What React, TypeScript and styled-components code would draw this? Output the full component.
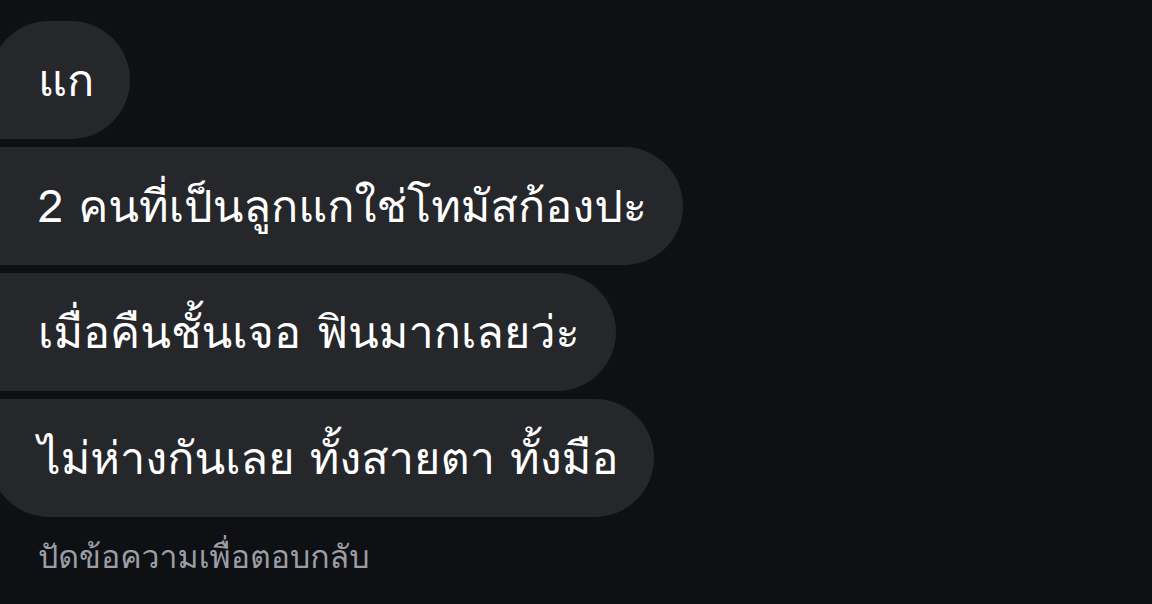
import React from "react";
import styled, { createGlobalStyle } from "styled-components";

const GlobalStyle = createGlobalStyle`
  html, body {
    margin: 0;
    padding: 0;
    background: #0e1014;
    overflow: hidden;
  }
`;

type Position = "first" | "middle" | "last";

const messages = [
  "แก",
  "2 คนที่เป็นลูกแกใช่โทมัสก้องปะ",
  "เมื่อคืนชั้นเจอ ฟินมากเลยว่ะ",
  "ไม่ห่างกันเลย ทั้งสายตา ทั้งมือ",
];

export default function App() {
  return (
    <>
      <GlobalStyle />
      <StyledThread>
        <BubbleList>
          {messages.map((text, i) => (
            <Bubble
              key={i}
              $position={i === 0 ? "first" : i === messages.length - 1 ? "last" : "middle"}
            >
              {text}
            </Bubble>
          ))}
        </BubbleList>
        <Hint>ปัดข้อความเพื่อตอบกลับ</Hint>
      </StyledThread>
    </>
  );
}

const StyledThread = styled.div`
  width: 1152px;
  height: 604px;
  background: #0e1014;
  padding-top: 21px;
  box-sizing: border-box;
  font-family: "Loma", "Noto Sans Thai Looped", sans-serif;
`;

const BubbleList = styled.div`
  display: flex;
  flex-direction: column;
  align-items: flex-start;
  gap: 8px;
  margin-left: -10px;
`;

const Bubble = styled.div<{ $position: Position }>`
  height: 118px;
  display: flex;
  align-items: center;
  padding: 0 36px 0 48px;
  background: #25272b;
  color: #ffffff;
  font-size: 45px;
  white-space: nowrap;
  border-radius: ${({ $position }) =>
    $position === "first"
      ? "59px 59px 59px 10px"
      : $position === "last"
      ? "10px 59px 59px 59px"
      : "10px 59px 59px 10px"};
`;

const Hint = styled.div`
  margin: 14px 0 0 38px;
  color: #9b9ea5;
  font-size: 32px;
`;
